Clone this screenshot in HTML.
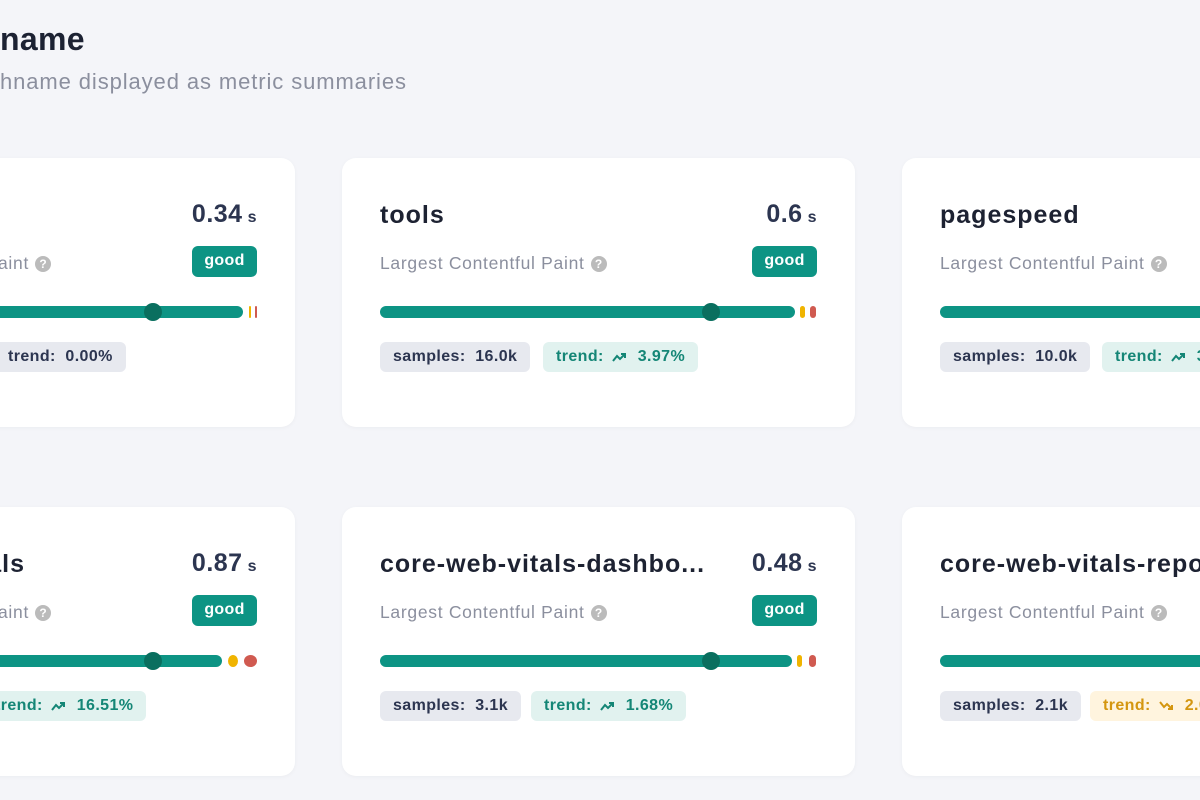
<!DOCTYPE html>
<html><head><meta charset="utf-8"><style>
*{box-sizing:border-box;margin:0;padding:0}
body{width:1200px;height:800px;overflow:hidden;background:#f4f5f9;font-family:"Liberation Sans",sans-serif;position:relative}
h1{position:absolute;left:0;top:21px;font-size:32px;font-weight:700;color:#1c2233;letter-spacing:0.3px}
.sub{position:absolute;left:0;top:69px;font-size:22px;color:#8b8f9e;letter-spacing:0.9px}
.card{position:absolute;width:513px;height:269px;background:#fff;border-radius:14px;box-shadow:0 1px 4px rgba(0,0,0,.04)}
.t{position:absolute;left:38px;top:43px;font-size:25px;font-weight:700;color:#1d2232;white-space:nowrap;letter-spacing:1px}
.v{position:absolute;right:38px;top:42px;font-size:25px;font-weight:700;color:#2c3550;letter-spacing:0.5px}
.v small{font-size:16px;margin-left:5px}
.l{position:absolute;left:38px;top:95px;font-size:17.5px;color:#8b8f9e;letter-spacing:0.7px}
.q{display:inline-block;width:16px;height:16px;border-radius:50%;background:#bbb;color:#fff;font-size:12px;text-align:center;line-height:16px;font-weight:700;vertical-align:1px;margin-left:6px;letter-spacing:0}
.g{position:absolute;right:38px;top:88px;width:65px;height:31px;background:#0d9484;border-radius:6px;color:#fff;font-weight:700;font-size:16px;text-align:center;line-height:30px;letter-spacing:0.3px}
.bar{position:absolute;left:38px;top:148px;height:12px;background:#0d9484;border-radius:6px}
.dot{position:absolute;top:145px;width:18px;height:18px;border-radius:50%;background:#0a6f5f}
.m{position:absolute;top:148px;height:12px;border-radius:6px}
.c{position:absolute;top:184px;height:30px;border-radius:6px;font-size:16px;line-height:30px;padding:0 13px;white-space:nowrap;font-weight:700;letter-spacing:0.4px}
.s{background:#e7e9ef;color:#2c3550}
.tr{background:#e1f2ef;color:#148676}
.y{background:#fff4de;color:#d4960f}
svg{vertical-align:-1px;margin:0 12px 0 8px}
</style></head><body>
<h1>name</h1>
<div class="sub">hname displayed as metric summaries</div>

<div class="card" style="left:-218px;top:158px">
<div class="v">0.34<small>s</small></div>
<div class="l" style="left:auto;right:244px">aint<span class="q">?</span></div>
<div class="g">good</div>
<div class="bar" style="left:-10px;width:471px"></div>
<div class="m" style="left:467px;width:2px;background:#f0b400"></div>
<div class="m" style="left:473px;width:2px;background:#d05a50"></div>
<div class="dot" style="left:362px"></div>
<div class="c s" style="left:176px;padding-left:50px">trend:&nbsp; 0.00%</div>
</div>

<div class="card" style="left:342px;top:158px">
<div class="t">tools</div>
<div class="v">0.6<small>s</small></div>
<div class="l">Largest Contentful Paint<span class="q">?</span></div>
<div class="g">good</div>
<div class="bar" style="width:415px"></div>
<div class="m" style="left:458px;width:5px;background:#f0b400"></div>
<div class="m" style="left:468px;width:6px;background:#d05a50"></div>
<div class="dot" style="left:360px"></div>
<div class="c s" style="left:38px">samples:&nbsp; 16.0k</div>
<div class="c tr" style="left:201px">trend:<svg width="14" height="10" viewBox="0 0 14 10"><path d="M1 9 L5 4 L8 7 L13 2 M9 2 H13 V6" fill="none" stroke="currentColor" stroke-width="2"/></svg>3.97%</div>
</div>

<div class="card" style="left:902px;top:158px">
<div class="t">pagespeed</div>
<div class="l">Largest Contentful Paint<span class="q">?</span></div>
<div class="bar" style="width:415px"></div>
<div class="c s" style="left:38px">samples:&nbsp; 10.0k</div>
<div class="c tr" style="left:200px">trend:<svg width="14" height="10" viewBox="0 0 14 10"><path d="M1 9 L5 4 L8 7 L13 2 M9 2 H13 V6" fill="none" stroke="currentColor" stroke-width="2"/></svg>3.97%</div>
</div>

<div class="card" style="left:-218px;top:507px">
<div class="t" style="left:auto;right:270px">als</div>
<div class="v">0.87<small>s</small></div>
<div class="l" style="left:auto;right:244px">aint<span class="q">?</span></div>
<div class="g">good</div>
<div class="bar" style="left:-10px;width:450px"></div>
<div class="m" style="left:446px;width:10px;border-radius:50%;background:#f0b400"></div>
<div class="m" style="left:462px;width:13px;border-radius:50%;background:#d05a50"></div>
<div class="dot" style="left:362px"></div>
<div class="c tr" style="left:200px;padding-left:13px">trend:<svg width="14" height="10" viewBox="0 0 14 10"><path d="M1 9 L5 4 L8 7 L13 2 M9 2 H13 V6" fill="none" stroke="currentColor" stroke-width="2"/></svg>16.51%</div>
</div>

<div class="card" style="left:342px;top:507px">
<div class="t">core-web-vitals-dashbo...</div>
<div class="v">0.48<small>s</small></div>
<div class="l">Largest Contentful Paint<span class="q">?</span></div>
<div class="g">good</div>
<div class="bar" style="width:412px"></div>
<div class="m" style="left:455px;width:5px;background:#f0b400"></div>
<div class="m" style="left:467px;width:7px;background:#d05a50"></div>
<div class="dot" style="left:360px"></div>
<div class="c s" style="left:38px">samples:&nbsp; 3.1k</div>
<div class="c tr" style="left:189px">trend:<svg width="14" height="10" viewBox="0 0 14 10"><path d="M1 9 L5 4 L8 7 L13 2 M9 2 H13 V6" fill="none" stroke="currentColor" stroke-width="2"/></svg>1.68%</div>
</div>

<div class="card" style="left:902px;top:507px">
<div class="t">core-web-vitals-report</div>
<div class="l">Largest Contentful Paint<span class="q">?</span></div>
<div class="bar" style="width:415px"></div>
<div class="c s" style="left:38px">samples:&nbsp; 2.1k</div>
<div class="c y" style="left:188px">trend:<svg width="14" height="10" viewBox="0 0 14 10"><path d="M1 1 L5 6 L8 3 L13 8 M9 8 H13 V4" fill="none" stroke="currentColor" stroke-width="2"/></svg>2.00%</div>
</div>
</body></html>
